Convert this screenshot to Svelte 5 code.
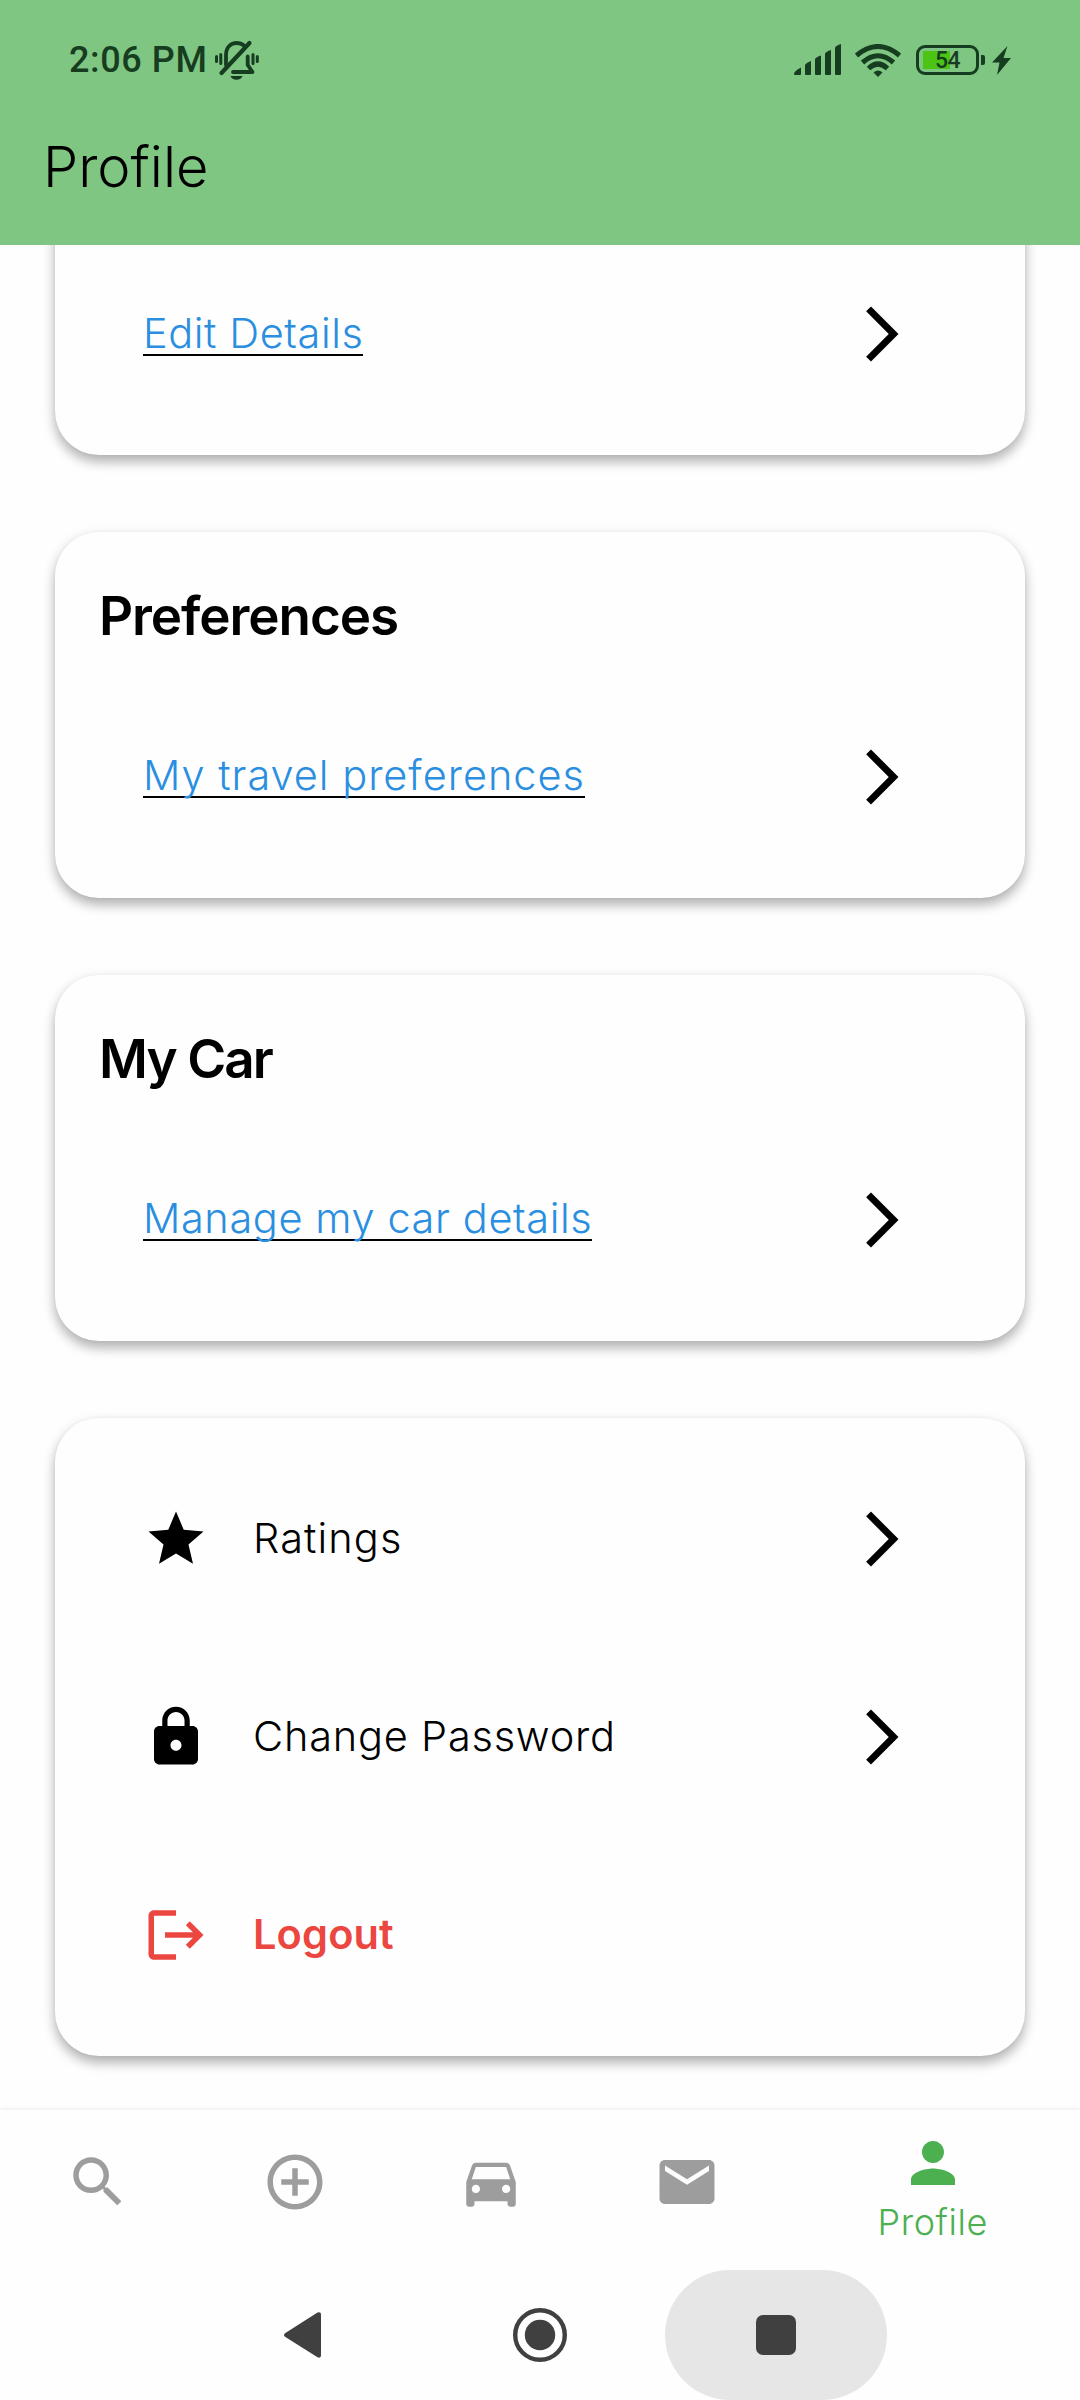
<script>
  const icons = {
    chevron: 'M6.23 20.23 8 22 18 12 8 2 6.23 3.77 14.46 12z',
    star: 'M12 17.27 18.18 21l-1.64-7.03L22 9.24l-7.19-.61L12 2 9.19 8.63 2 9.24l5.46 4.73L5.82 21z',
    lock: 'M18 8h-1V6c0-2.76-2.24-5-5-5S7 3.24 7 6v2H6c-1.1 0-2 .9-2 2v10c0 1.1.9 2 2 2h12c1.1 0 2-.9 2-2V10c0-1.1-.9-2-2-2zm-6 9c-1.1 0-2-.9-2-2s.9-2 2-2 2 .9 2 2-.9 2-2 2zm3.1-9H8.9V6c0-1.71 1.39-3.1 3.1-3.1s3.1 1.39 3.1 3.1v2z',
    logout: 'm17 7-1.41 1.41L18.17 11H8v2h10.17l-2.58 2.58L17 17l5-5zM4 5h8V3H4c-1.1 0-2 .9-2 2v14c0 1.1.9 2 2 2h8v-2H4z',
    search: 'M15.5 14h-.79l-.28-.27C15.41 12.59 16 11.11 16 9.5 16 5.91 13.09 3 9.5 3S3 5.91 3 9.5 5.91 16 9.5 16c1.61 0 3.09-.59 4.23-1.57l.27.28v.79l5 4.99L20.49 19zm-6 0C7.01 14 5 11.99 5 9.5S7.01 5 9.5 5 14 7.01 14 9.5 11.99 14 9.5 14z',
    add: 'M13 7h-2v4H7v2h4v4h2v-4h4v-2h-4zm-1-5C6.48 2 2 6.48 2 12s4.48 10 10 10 10-4.48 10-10S17.52 2 12 2zm0 18c-4.41 0-8-3.59-8-8s3.59-8 8-8 8 3.59 8 8-3.59 8-8 8z',
    car: 'M18.92 6.01C18.72 5.42 18.16 5 17.5 5h-11c-.66 0-1.21.42-1.42 1.01L3 12v8c0 .55.45 1 1 1h1c.55 0 1-.45 1-1v-1h12v1c0 .55.45 1 1 1h1c.55 0 1-.45 1-1v-8zM6.5 16c-.83 0-1.5-.67-1.5-1.5S5.67 13 6.5 13s1.5.67 1.5 1.5S7.33 16 6.5 16zm11 0c-.83 0-1.5-.67-1.5-1.5s.67-1.5 1.5-1.5 1.5.67 1.5 1.5-.67 1.5-1.5 1.5zM5 11l1.5-4.5h11L19 11z',
    mail: 'M20 4H4c-1.1 0-1.99.9-1.99 2L2 18c0 1.1.9 2 2 2h16c1.1 0 2-.9 2-2V6c0-1.1-.9-2-2-2zm0 4-8 5-8-5V6l8 5 8-5z',
    person: 'M12 12c2.21 0 4-1.79 4-4s-1.79-4-4-4-4 1.79-4 4 1.79 4 4 4zm0 2c-2.67 0-8 1.34-8 4v2h16v-2c0-2.66-5.33-4-8-4z'
  };
  const tabs = ['search', 'add', 'car', 'mail'];
</script>

{#snippet icon(name)}
  <svg class="icon" viewBox="0 0 24 24"><path d={icons[name]} /></svg>
{/snippet}

{#snippet linkRow(label, cls)}
  <div class="row">
    <a class="link {cls}" href="#top">{label}</a>
    {@render icon('chevron')}
  </div>
{/snippet}

<div class="screen">
  <header>
    <div class="status">
      <span class="time">2:06 PM</span>
      <svg class="bell" viewBox="0 0 46 40" fill="none" stroke="#173d20" stroke-width="3.8" stroke-linecap="round">
        <path d="M12 25V15C12 7 17 3 22.5 3c3.200 0 5.600.9 7.500 2.500" />
        <path d="M7.500 33 35.500 3" stroke-width="4.200" />
        <path d="M19 32h19.500L33.700 25V16.500" stroke-linejoin="round" />
        <path d="M16.500 36h12c-1 2.500-3 3.700-6 3.700s-5-1.200-6-3.700z" fill="#173d20" stroke="none" />
        <path d="M2.500 16.500v5M6.800 14.500v9M39 14.500v9M43.300 16.500v5" stroke-width="3" />
      </svg>
      <span class="spacer"></span>
      <svg class="signal" viewBox="0 0 48 32" fill="#173d20">
        <path d="M0 30q0-3 7-6.500V30q0 1-1 1H1q-1 0-1-1z" />
        <path d="M11 21q1-2 6-4v13q0 1-1 1h-4q-1 0-1-1z" />
        <path d="M21 15q1-2 6-3.500V30q0 1-1 1h-4q-1 0-1-1z" />
        <path d="M31 9.500q1-2 6-3.500v24q0 1-1 1h-4q-1 0-1-1z" />
        <path d="M41 3.500q1-2 6-3.500v30q0 1-1 1h-4q-1 0-1-1z" />
      </svg>
      <svg class="wifi" viewBox="0 0 46 33" fill="none" stroke="#173d20" stroke-width="5">
        <path d="M1.500 11.500Q23-6.500 44.500 11.500" />
        <path d="M7.500 18.500Q23 5 38.500 18.500" />
        <path d="M13.500 24.500Q23 15.500 32.500 24.500" />
        <path d="M23 33l-4.500-4.500q4.500-4 9 0z" fill="#173d20" stroke="none" />
      </svg>
      <div class="battery"><span>54</span></div>
      <i class="nub"></i>
      <svg class="bolt" viewBox="0 0 19 29" fill="#173d20"><path d="M15.500 0 0 16.500h7.500L5 29l14-17h-7.500z" /></svg>
    </div>
    <h1>Profile</h1>
  </header>

  <main>
    <section class="card first">{@render linkRow('Edit Details', 'edit')}</section>
    <section class="card">
      <h2 class="prefs">Preferences</h2>
      {@render linkRow('My travel preferences', 'travel')}
    </section>
    <section class="card">
      <h2 class="mycar">My Car</h2>
      {@render linkRow('Manage my car details', 'manage')}
    </section>
    <section class="card">
      <div class="row">{@render icon('star')}<span class="label ratings">Ratings</span>{@render icon('chevron')}</div>
      <div class="row">{@render icon('lock')}<span class="label change">Change Password</span>{@render icon('chevron')}</div>
      <div class="row logout">{@render icon('logout')}<span class="label">Logout</span></div>
    </section>
  </main>

  <nav>
    {#each tabs as tab}
      <div class="tab">{@render icon(tab)}</div>
    {/each}
    <div class="tab active">{@render icon('person')}<span>Profile</span></div>
  </nav>

  <footer>
    <div class="key">
      <svg class="back" viewBox="0 0 37 46"><path d="M1 21.200 33.500.6q3.500-1.500 3.500 2v41q0 3-3.500 1.700L1 24.800q-2-1.800 0-3.600z" fill="#404040" /></svg>
    </div>
    <div class="key">
      <svg class="home" viewBox="0 0 54 54"><circle cx="27" cy="27" r="24.800" fill="none" stroke="#404040" stroke-width="4.400" /><circle cx="27" cy="27" r="15.200" fill="#404040" /></svg>
    </div>
    <div class="key pressed"><i></i></div>
  </footer>
</div>

<style>
  :global(body) { margin: 0; background: #fefefe; }
  .screen {
    width: 1080px;
    height: 2400px;
    display: flex;
    flex-direction: column;
    overflow: hidden;
    background: #fefefe;
    color: #000;
    font-family: Inter, "Liberation Sans", sans-serif;
    font-weight: 300;
  }
  .icon { width: 66px; height: 66px; flex: none; fill: currentColor; display: block; }

  header { height: 245px; flex: none; background: #80c683; box-sizing: border-box; padding-top: 30px; }
  .status { display: flex; align-items: center; height: 60px; padding: 0 69px; color: #173d20; font-family: Roboto, sans-serif; }
  .time { width: 145px; font-size: 36px; font-weight: 500; line-height: 60px; letter-spacing: 0.6px; white-space: nowrap; }
  .bell { width: 46px; height: 40px; flex: none; }
  .spacer { flex: 1; }
  .signal { width: 48px; height: 32px; margin-right: 13px; }
  .wifi { width: 46px; height: 33px; margin-right: 15px; }
  .battery {
    width: 63px; height: 30px; box-sizing: border-box; border: 3px solid #173d20; border-radius: 9px;
    padding: 4px 3px 2px; background: linear-gradient(90deg, #4cc413, #4cc413) 4px 3px / 27px 18px no-repeat;
    display: flex; align-items: center; justify-content: center; font-size: 23px; font-weight: 500; line-height: 24px;
    letter-spacing: -0.5px;
  }
  .nub { width: 4px; height: 10px; margin: 0 7px 0 2px; border-radius: 0 2px 2px 0; background: #173d20; }
  .bolt { width: 19px; height: 29px; }
  h1 { margin: 44px 0 0 43px; font-size: 56px; font-weight: 300; line-height: 66px; letter-spacing: 0; }

  main { flex: 1; min-height: 0; overflow: hidden; padding: 0 55px; }
  .card {
    box-sizing: border-box; margin-bottom: 77.300px; padding: 22px 44px; border-radius: 44px; background: #fefefe;
    box-shadow: 0 7px 12px rgba(0, 0, 0, 0.27), 0 0 3px rgba(0, 0, 0, 0.04), 0 3px 16px rgba(0, 0, 0, 0.06);
  }
  .card.first { margin-top: -132px; padding-top: 122px; }
  h2 { height: 123.600px; margin: 0; font-size: 53px; font-weight: 600; line-height: 125px; white-space: nowrap; }
  .prefs { letter-spacing: -1.100px; }
  .mycar { letter-spacing: -1.900px; }
  .row { height: 198px; display: flex; align-items: center; padding: 0 66px 0 44px; }
  .row > .icon:last-child { margin-left: auto; }
  .link {
    color: #2a8fe0; font-size: 41.500px; line-height: 41px; white-space: nowrap;
    text-decoration: none; border-bottom: 2px solid #000;
  }
  .edit { letter-spacing: 0.570px; }
  .travel { letter-spacing: 0.980px; }
  .manage { letter-spacing: 0.600px; }
  .label { margin-left: 44px; padding-bottom: 3px; font-size: 41.500px; line-height: 48px; white-space: nowrap; }
  .ratings { letter-spacing: 1.100px; }
  .change { letter-spacing: 0.780px; }
  .logout { color: #eb4640; }
  .logout .label { font-weight: 600; letter-spacing: 0.150px; }

  nav { height: 160px; flex: none; display: flex; background: #fefefe; box-shadow: 0 -1px 5px rgba(0, 0, 0, 0.08); z-index: 1; }
  .tab { flex: 1; display: flex; flex-direction: column; align-items: center; justify-content: center; color: #9d9d9d; padding-bottom: 17px; }
  .tab.active { flex: 1.5; justify-content: flex-start; color: #4caf50; padding: 20px 0 0; }
  .active span { font-size: 36px; line-height: 44px; margin-top: 4px; letter-spacing: 0.550px; }

  footer { height: 130px; flex: none; display: flex; justify-content: center; gap: 14px; background: #fefefe; z-index: 1; }
  .key { width: 222px; display: flex; align-items: center; justify-content: center; border-radius: 65px; }
  .pressed { background: #e6e6e6; }
  .pressed i { width: 40px; height: 40px; border-radius: 7px; background: #404040; }
  .back { width: 37px; height: 46px; margin-right: 3px; }
  .home { width: 54px; height: 54px; }
</style>
